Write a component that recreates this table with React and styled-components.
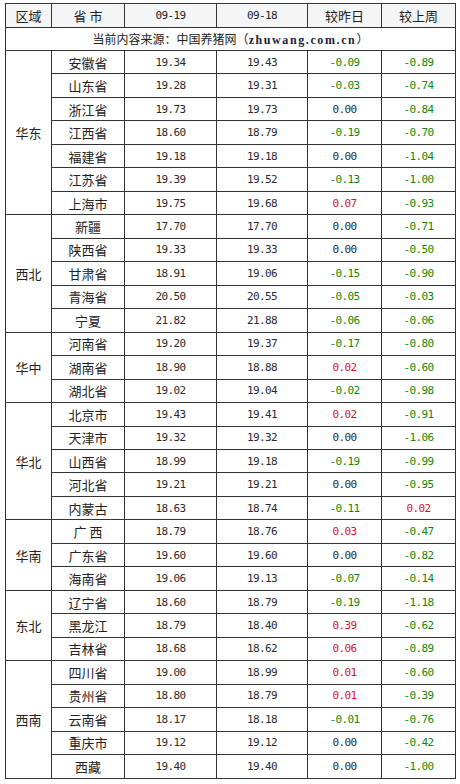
import React from 'react'
import styled, { createGlobalStyle } from 'styled-components'

const GlobalStyle = createGlobalStyle`
  body {
    margin: 0;
    background: #fff;
    font-family: 'Noto Sans CJK SC', 'Liberation Sans', sans-serif;
    color: #222;
  }
`

const Page = styled.div`
  padding: 3px 5px 0 5px;
`

const Table = styled.table`
  width: 450px;
  border-collapse: collapse;
  table-layout: fixed;
  border: 1px solid #333;
`

const HeadRow = styled.tr`
  height: 24px;
  background: #f3f5f7;
`

const HeadCell = styled.th`
  border: 1px solid #333;
  padding: 0;
  font-weight: normal;
  text-align: center;
  font-size: ${p => (p.$num ? '11px' : '13px')};
  font-family: ${p => (p.$num ? "'DejaVu Sans Mono', monospace" : "'Noto Sans CJK SC', sans-serif")};
  letter-spacing: ${p => (p.$num ? '-0.6px' : '0')};
  color: #222;
`

const SourceRow = styled.tr`
  height: 23px;
`

const SourceCell = styled.td`
  border: 1px solid #333;
  padding: 0;
  text-align: center;
  font-size: 12px;
`

const Site = styled.b`
  font-family: 'Liberation Serif', serif;
  font-size: 12px;
  letter-spacing: 1.6px;
  color: #1c1c3a;
`

const DataRow = styled.tr`
  height: 23.48px;
`

const RegionCell = styled.td`
  border: 1px solid #333;
  padding: 0;
  text-align: center;
  font-size: 13px;
`

const NameCell = styled.td`
  border: 1px solid #333;
  padding: 0;
  text-align: center;
  font-size: 13px;
  white-space: pre;
`

const toneColor = { up: '#d9141d', down: '#0a8a0a', flat: '#2a2a2a' }

const NumCell = styled.td`
  border: 1px solid #333;
  padding: 0;
  text-align: center;
  font-family: 'DejaVu Sans Mono', monospace;
  font-size: 11px;
  letter-spacing: -0.6px;
  color: ${p => toneColor[p.$tone || 'flat']};
`

const regions = [
  ['华东', [
    ['安徽省', '19.34', '19.43', '-0.09', '-0.89'],
    ['山东省', '19.28', '19.31', '-0.03', '-0.74'],
    ['浙江省', '19.73', '19.73', '0.00', '-0.84'],
    ['江西省', '18.60', '18.79', '-0.19', '-0.70'],
    ['福建省', '19.18', '19.18', '0.00', '-1.04'],
    ['江苏省', '19.39', '19.52', '-0.13', '-1.00'],
    ['上海市', '19.75', '19.68', '0.07', '-0.93'],
  ]],
  ['西北', [
    ['新疆', '17.70', '17.70', '0.00', '-0.71'],
    ['陕西省', '19.33', '19.33', '0.00', '-0.50'],
    ['甘肃省', '18.91', '19.06', '-0.15', '-0.90'],
    ['青海省', '20.50', '20.55', '-0.05', '-0.03'],
    ['宁夏', '21.82', '21.88', '-0.06', '-0.06'],
  ]],
  ['华中', [
    ['河南省', '19.20', '19.37', '-0.17', '-0.80'],
    ['湖南省', '18.90', '18.88', '0.02', '-0.60'],
    ['湖北省', '19.02', '19.04', '-0.02', '-0.98'],
  ]],
  ['华北', [
    ['北京市', '19.43', '19.41', '0.02', '-0.91'],
    ['天津市', '19.32', '19.32', '0.00', '-1.06'],
    ['山西省', '18.99', '19.18', '-0.19', '-0.99'],
    ['河北省', '19.21', '19.21', '0.00', '-0.95'],
    ['内蒙古', '18.63', '18.74', '-0.11', '0.02'],
  ]],
  ['华南', [
    ['广 西', '18.79', '18.76', '0.03', '-0.47'],
    ['广东省', '19.60', '19.60', '0.00', '-0.82'],
    ['海南省', '19.06', '19.13', '-0.07', '-0.14'],
  ]],
  ['东北', [
    ['辽宁省', '18.60', '18.79', '-0.19', '-1.18'],
    ['黑龙江', '18.79', '18.40', '0.39', '-0.62'],
    ['吉林省', '18.68', '18.62', '0.06', '-0.89'],
  ]],
  ['西南', [
    ['四川省', '19.00', '18.99', '0.01', '-0.60'],
    ['贵州省', '18.80', '18.79', '0.01', '-0.39'],
    ['云南省', '18.17', '18.18', '-0.01', '-0.76'],
    ['重庆市', '19.12', '19.12', '0.00', '-0.42'],
    ['西藏', '19.40', '19.40', '0.00', '-1.00'],
  ]],
]

const tone = v => (v.startsWith('-') ? 'down' : v === '0.00' ? 'flat' : 'up')

export default function App() {
  return (
    <Page>
      <GlobalStyle />
      <Table>
        <colgroup>
          <col style={{ width: 46 }} />
          <col style={{ width: 73 }} />
          <col style={{ width: 92 }} />
          <col style={{ width: 91 }} />
          <col style={{ width: 74 }} />
          <col style={{ width: 74 }} />
        </colgroup>
        <thead>
          <HeadRow>
            <HeadCell>区域</HeadCell>
            <HeadCell style={{ whiteSpace: 'pre' }}>省 市</HeadCell>
            <HeadCell $num>09-19</HeadCell>
            <HeadCell $num>09-18</HeadCell>
            <HeadCell>较昨日</HeadCell>
            <HeadCell>较上周</HeadCell>
          </HeadRow>
        </thead>
        <tbody>
          <SourceRow>
            <SourceCell colSpan={6}>
              当前内容来源：中国养猪网（<Site>zhuwang.com.cn</Site>）
            </SourceCell>
          </SourceRow>
          {regions.map(([region, rows]) =>
            rows.map((r, i) => (
              <DataRow key={region + r[0]}>
                {i === 0 && <RegionCell rowSpan={rows.length}>{region}</RegionCell>}
                <NameCell>{r[0]}</NameCell>
                <NumCell>{r[1]}</NumCell>
                <NumCell>{r[2]}</NumCell>
                <NumCell $tone={tone(r[3])}>{r[3]}</NumCell>
                <NumCell $tone={tone(r[4])}>{r[4]}</NumCell>
              </DataRow>
            ))
          )}
        </tbody>
      </Table>
    </Page>
  )
}
